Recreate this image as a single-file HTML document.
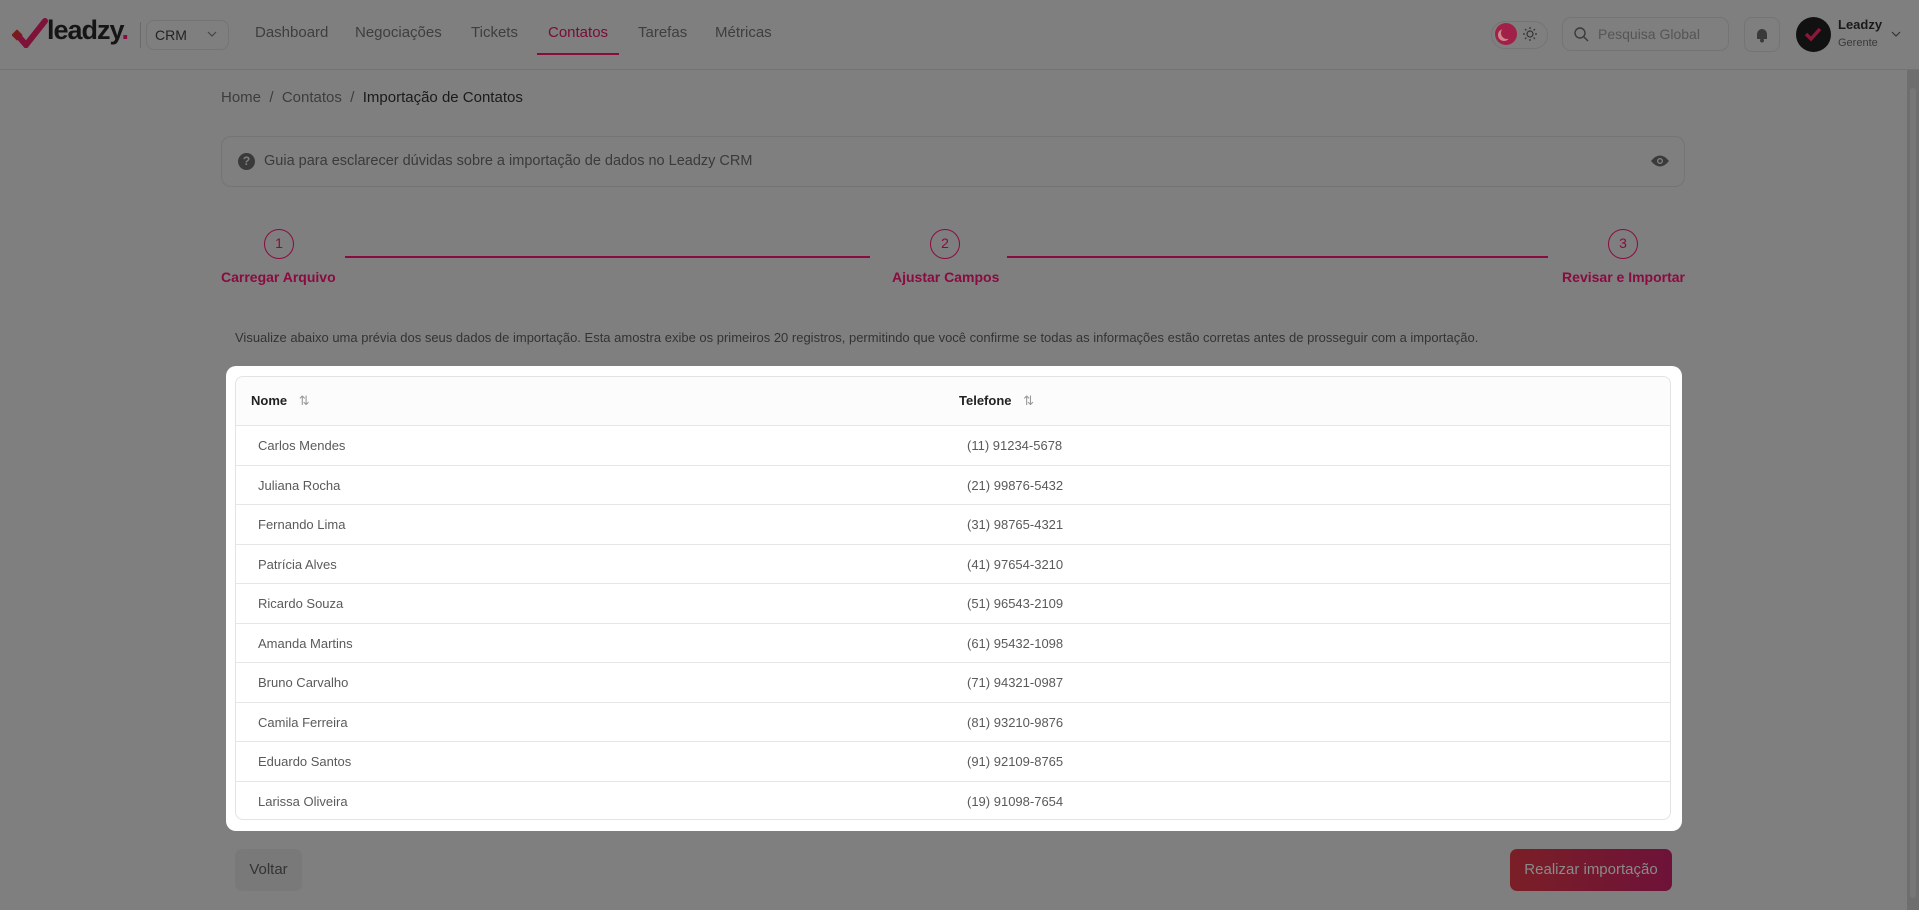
<!DOCTYPE html>
<html><head><meta charset="utf-8"><style>
*{box-sizing:border-box;margin:0;padding:0}
body{width:1919px;height:910px;overflow:hidden;background:#7f7f7f;font-family:"Liberation Sans",sans-serif;position:relative;color:#333}
.a{position:absolute;white-space:nowrap}
.nav{font-size:15px;color:#3e3e3e;top:24px}
.hdr{position:absolute;left:0;top:0;width:1919px;height:70px;border-bottom:1px solid #737373}
.step{position:absolute;width:30px;height:30px;border:1.5px solid #8a0b3f;border-radius:50%;color:#8a0b3f;font-size:14px;text-align:center;line-height:27px}
.lbl{color:#8a0b3f;font-size:14px;font-weight:bold;top:269px}
.line{position:absolute;height:2px;background:#8a0b3f;top:256px}
.tbl{position:absolute;left:235px;top:376px;width:1436px;height:444px;border:1px solid #e3e3e3;border-radius:8px;background:#fff}
.row{position:absolute;left:0;width:1434px;height:40px;border-top:1px solid #e6e6e6;font-size:13px;color:#5a5a5a}
.row span{position:absolute;top:12px}
</style></head><body>
<div class="hdr"></div>
<svg class="a" style="left:12px;top:18px" width="36" height="30" viewBox="0 0 36 30"><rect x="1" y="13" width="8" height="8" fill="#7a1a1a" transform="rotate(45 5 17)"/><path d="M8 20 L14 27 L33 3" stroke="#7f1239" stroke-width="6" fill="none" stroke-linecap="round"/></svg>
<div class="a" style="left:47px;top:15px;font-size:27px;font-weight:bold;color:#151515;letter-spacing:-1px">leadzy<span style="color:#8a0b3f">.</span></div>
<div class="a" style="left:140px;top:22px;width:1px;height:26px;background:#6a6a6a"></div>
<div class="a" style="left:146px;top:20px;width:83px;height:30px;border:1px solid #747474;border-radius:8px"></div>
<div class="a" style="left:155px;top:27px;font-size:14px;color:#222">CRM</div>
<svg class="a" style="left:207px;top:31px" width="10" height="7" viewBox="0 0 10 7"><path d="M1 1 L5 5 L9 1" stroke="#444" stroke-width="1.2" fill="none"/></svg>
<div class="a nav" style="left:255px">Dashboard</div>
<div class="a nav" style="left:355px">Negociações</div>
<div class="a nav" style="left:471px">Tickets</div>
<div class="a nav" style="left:548px;color:#7a0b38">Contatos</div>
<div class="a" style="left:537px;top:53px;width:82px;height:2px;background:#8a0b3f"></div>
<div class="a nav" style="left:638px">Tarefas</div>
<div class="a nav" style="left:715px">Métricas</div>
<div class="a" style="left:1491px;top:21px;width:57px;height:28px;border:1px solid #747474;border-radius:14px"></div>
<div class="a" style="left:1495px;top:23px;width:22px;height:22px;border-radius:50%;background:#a0204a"></div>
<div class="a" style="left:1501px;top:27px;width:12px;height:12px;border-radius:50%;box-shadow:-3px 2px 0 0 #c88"></div>
<svg class="a" style="left:1522px;top:26px" width="16" height="16" viewBox="0 0 16 16"><circle cx="8" cy="8" r="3" stroke="#333" stroke-width="1.2" fill="none"/><path d="M8 1v2M8 13v2M1 8h2M13 8h2M3 3l1.4 1.4M11.6 11.6L13 13M3 13l1.4-1.4M11.6 4.4L13 3" stroke="#333" stroke-width="1.2"/></svg>
<div class="a" style="left:1562px;top:17px;width:167px;height:34px;border:1px solid #747474;border-radius:9px"></div>
<svg class="a" style="left:1573px;top:26px" width="16" height="16" viewBox="0 0 16 16"><circle cx="7" cy="7" r="5" stroke="#3a3a3a" stroke-width="1.4" fill="none"/><path d="M11 11 L15 15" stroke="#3a3a3a" stroke-width="1.4"/></svg>
<div class="a" style="left:1598px;top:26px;font-size:14px;color:#555">Pesquisa Global</div>
<div class="a" style="left:1744px;top:17px;width:36px;height:35px;border:1px solid #747474;border-radius:8px"></div>
<svg class="a" style="left:1754px;top:27px" width="16" height="16" viewBox="0 0 16 16"><path d="M3 12 L3 7 A5 5 0 0 1 13 7 L13 12 Z" fill="#3a3a3a"/><circle cx="8" cy="13.5" r="2" fill="#3a3a3a"/></svg>
<div class="a" style="left:1796px;top:17px;width:35px;height:35px;border-radius:50%;background:#111"></div>
<svg class="a" style="left:1803px;top:26px" width="20" height="16" viewBox="0 0 20 16"><path d="M3 8 L8 13 L17 3" stroke="#8a1838" stroke-width="3.5" fill="none"/></svg>
<div class="a" style="left:1838px;top:17px;font-size:13px;font-weight:bold;color:#1a1a1a">Leadzy</div>
<div class="a" style="left:1838px;top:37px;font-size:11px;color:#3a3a3a">Gerente</div>
<svg class="a" style="left:1891px;top:31px" width="10" height="7" viewBox="0 0 10 7"><path d="M1 1 L5 5 L9 1" stroke="#333" stroke-width="1.2" fill="none"/></svg>
<div class="a" style="left:1907px;top:70px;width:12px;height:840px;background:#6e6e6e"></div>
<div class="a" style="left:1910px;top:88px;width:6px;height:810px;background:#777;border-radius:3px"></div>

<div class="a" style="left:221px;top:89px;font-size:15px;color:#3d3d3d">Home &nbsp;/&nbsp; Contatos &nbsp;/&nbsp; <span style="color:#1a1a1a">Importação de Contatos</span></div>
<div class="a" style="left:221px;top:136px;width:1464px;height:51px;border:1px solid #747474;border-radius:10px"></div>
<div class="a" style="left:238px;top:153px;width:17px;height:17px;border-radius:50%;background:#3a3a3a;color:#7f7f7f;font-size:12px;font-weight:bold;text-align:center;line-height:17px">?</div>
<div class="a" style="left:264px;top:153px;font-size:14.5px;color:#3a3a3a">Guia para esclarecer dúvidas sobre a importação de dados no Leadzy CRM</div>
<svg class="a" style="left:1650px;top:154px" width="20" height="14" viewBox="0 0 20 14"><path d="M1 7 Q10 -4 19 7 Q10 18 1 7Z" fill="#3a3a3a"/><circle cx="10" cy="7" r="3" fill="#7f7f7f"/><circle cx="10" cy="7" r="1.6" fill="#3a3a3a"/></svg>

<div class="step" style="left:264px;top:229px">1</div>
<div class="step" style="left:930px;top:229px">2</div>
<div class="step" style="left:1608px;top:229px">3</div>
<div class="line" style="left:345px;width:525px"></div>
<div class="line" style="left:1007px;width:541px"></div>
<div class="a lbl" style="left:221px">Carregar Arquivo</div>
<div class="a lbl" style="left:892px">Ajustar Campos</div>
<div class="a lbl" style="right:234px">Revisar e Importar</div>
<div class="a" style="left:235px;top:330px;font-size:13px;color:#333">Visualize abaixo uma prévia dos seus dados de importação. Esta amostra exibe os primeiros 20 registros, permitindo que você confirme se todas as informações estão corretas antes de prosseguir com a importação.</div>

<div class="a" style="left:226px;top:366px;width:1456px;height:465px;background:#fff;border-radius:10px"></div>
<div class="tbl">
<div class="a" style="left:0;top:0;width:1434px;height:48px;background:#fcfcfc;border-radius:8px 8px 0 0"></div>
<div class="a" style="left:15px;top:16px;font-size:13px;font-weight:bold;color:#222">Nome <span style="font-weight:normal;color:#999;margin-left:8px">⇅</span></div>
<div class="a" style="left:723px;top:16px;font-size:13px;font-weight:bold;color:#222">Telefone <span style="font-weight:normal;color:#999;margin-left:8px">⇅</span></div>
<div class="row" style="top:48px"><span style="left:22px">Carlos Mendes</span><span style="left:731px">(11) 91234-5678</span></div>
<div class="row" style="top:88px"><span style="left:22px">Juliana Rocha</span><span style="left:731px">(21) 99876-5432</span></div>
<div class="row" style="top:127px"><span style="left:22px">Fernando Lima</span><span style="left:731px">(31) 98765-4321</span></div>
<div class="row" style="top:167px"><span style="left:22px">Patrícia Alves</span><span style="left:731px">(41) 97654-3210</span></div>
<div class="row" style="top:206px"><span style="left:22px">Ricardo Souza</span><span style="left:731px">(51) 96543-2109</span></div>
<div class="row" style="top:246px"><span style="left:22px">Amanda Martins</span><span style="left:731px">(61) 95432-1098</span></div>
<div class="row" style="top:285px"><span style="left:22px">Bruno Carvalho</span><span style="left:731px">(71) 94321-0987</span></div>
<div class="row" style="top:325px"><span style="left:22px">Camila Ferreira</span><span style="left:731px">(81) 93210-9876</span></div>
<div class="row" style="top:364px"><span style="left:22px">Eduardo Santos</span><span style="left:731px">(91) 92109-8765</span></div>
<div class="row" style="top:404px;height:38px"><span style="left:22px">Larissa Oliveira</span><span style="left:731px">(19) 91098-7654</span></div>
</div>

<div class="a" style="left:235px;top:849px;width:67px;height:42px;background:#797979;border-radius:7px;font-size:15px;color:#333;text-align:center;line-height:42px">Voltar</div>
<div class="a" style="left:1510px;top:849px;width:162px;height:42px;background:linear-gradient(90deg,#7a1f26,#6e1239);border-radius:7px;font-size:15px;color:#8a8a8a;text-align:center;line-height:42px">Realizar importação</div>
</body></html>
